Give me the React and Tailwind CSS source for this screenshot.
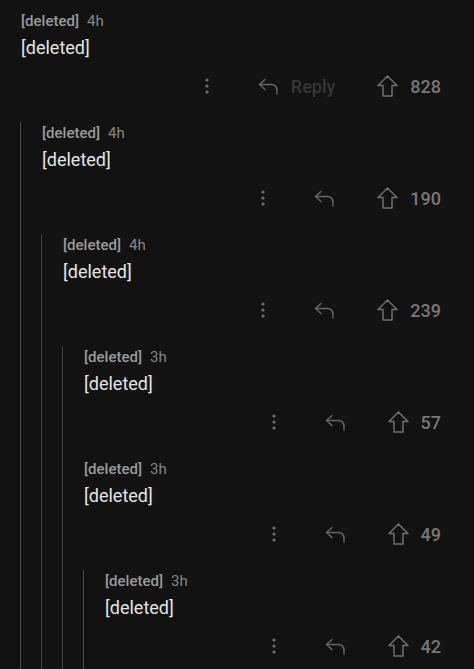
import React from 'react';

const thread = {
  time: '4h', votes: 828, showReplyText: true,
  children: [
    {
      time: '4h', votes: 190,
      children: [
        {
          time: '4h', votes: 239,
          children: [
            { time: '3h', votes: 57, children: [] },
            {
              time: '3h', votes: 49,
              children: [{ time: '3h', votes: 42, children: [] }],
            },
          ],
        },
      ],
    },
  ],
};

function Dots() {
  return (
    <svg width="4" height="16" viewBox="0 0 4 16" fill="#6f6f6f">
      <circle cx="2" cy="2" r="1.6" />
      <circle cx="2" cy="8" r="1.6" />
      <circle cx="2" cy="14" r="1.6" />
    </svg>
  );
}

function ReplyIcon() {
  return (
    <svg width="21" height="17" viewBox="0 0 21 17" fill="none" stroke="#666" strokeWidth="1.5" strokeLinecap="round" strokeLinejoin="round">
      <path d="M7 1.5 L1.5 6.5 L7 11.5" />
      <path d="M1.5 6.5 H13.5 a5.5 5.5 0 0 1 5.5 5.5 V16" />
    </svg>
  );
}

function UpIcon() {
  return (
    <svg width="21" height="22" viewBox="0 0 21 22" fill="none" stroke="#6f6f6f" strokeWidth="1.5" strokeLinejoin="round">
      <path d="M10.5 1 L1 10.5 H6 V21 H15 V10.5 H20 Z" />
    </svg>
  );
}

function Comment({ c }) {
  return (
    <div className="pt-px pl-px">
      <div className="h-[20px] leading-[20px] text-[15px] flex gap-[8px]">
        <span className="font-medium text-[#9a9a9a]">[deleted]</span>
        <span className="text-[#858585]">{c.time}</span>
      </div>
      <div className="mt-[5px] h-[24px] leading-[24px] text-[18px] text-[#e4e4e4]">[deleted]</div>
      <div className="mt-[6px] h-[40px] flex items-center justify-end">
        <div className="w-[24px] flex justify-center"><Dots /></div>
        <div className="ml-[39px] flex items-center">
          <ReplyIcon />
          <span className={c.showReplyText ? 'ml-3 text-[18px] font-medium text-[#363636]' : 'hidden'}>Reply</span>
        </div>
        <div className="ml-[42px] flex items-center">
          <UpIcon />
          <span className="ml-3 text-[18px] font-medium text-[#777]">{c.votes}</span>
        </div>
      </div>
      {c.children.length > 0 && (
        <div className="mt-4 -ml-px border-l border-[#474747] pl-5 flex flex-col gap-4 pb-6">
          {c.children.map((ch, i) => <Comment key={i} c={ch} />)}
        </div>
      )}
    </div>
  );
}

export default function App() {
  return (
    <div className="min-h-screen bg-[#121212] pl-5 pr-[33px] pt-[10px] overflow-hidden" style={{ fontFamily: 'Roboto, "Noto Sans", sans-serif' }}>
      <Comment c={thread} />
    </div>
  );
}
